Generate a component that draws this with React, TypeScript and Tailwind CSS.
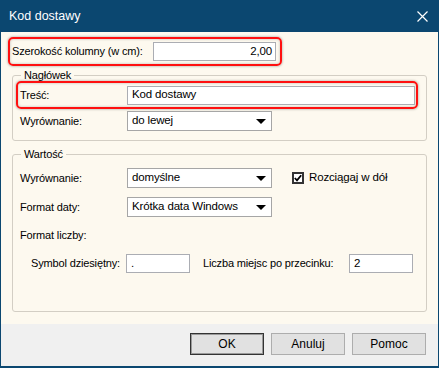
import React from "react";

const font = { fontFamily: '"Liberation Sans", Arial, sans-serif' };

function Arrow() {
  return (
    <svg width="10" height="5" viewBox="0 0 10 5" className="shrink-0">
      <polygon points="0,0 10,0 5,5" fill="#000" />
    </svg>
  );
}

function Select({ value }: { value: string }) {
  return (
    <div className="flex h-[20px] w-[145px] shrink-0 items-center justify-between border border-[#a6a6a6] bg-white pl-[4px] pr-[5px]">
      <span className="whitespace-nowrap text-[11.5px] leading-none">{value}</span>
      <Arrow />
    </div>
  );
}

function TextBox({ value, w, right }: { value: string; w: string; right?: boolean }) {
  return (
    <div
      className={`flex h-[19px] shrink-0 items-center border border-[#abadb3] bg-white px-[4px] ${w} ${
        right ? "justify-end pr-[3px]" : ""
      }`}
    >
      <span className="whitespace-nowrap text-[11.5px] leading-none">{value}</span>
    </div>
  );
}

const red =
  "rounded-[5px] border-2 border-[#ff1010] shadow-[0_0_2px_1px_rgba(0,0,0,0.18),inset_0_0_2px_1px_rgba(0,0,0,0.12)]";

export default function App() {
  return (
    <div
      className="flex h-[368px] w-[439px] flex-col border-x border-b-2 border-[#0b4770] bg-[#0b4770] whitespace-nowrap text-[11px] tracking-[-0.15px] text-black"
      style={font}
    >
      {/* Title bar */}
      <div className="flex h-[32px] shrink-0 items-center justify-between pl-[8px] pr-[10px] tracking-normal text-white">
        <span className="text-[12.5px]">Kod dostawy</span>
        <svg width="11" height="11" viewBox="0 0 11 11">
          <path d="M0.5 0.5 L10.5 10.5 M10.5 0.5 L0.5 10.5" stroke="#fff" strokeWidth="1.2" />
        </svg>
      </div>

      {/* Body */}
      <div className="flex h-[292px] shrink-0 flex-col bg-[#fdf9ef] pl-[7px]">
        <div className={`mt-[5px] flex h-[29px] w-[274px] items-center justify-between pl-[2px] pr-[4px] ${red}`}>
          <span>Szerokość kolumny (w cm):</span>
          <TextBox value="2,00" w="w-[123px]" right />
        </div>

        {/* Nagłówek */}
        <fieldset className="ml-[4px] mt-[3px] w-[415px] rounded-[3px] border border-[#d3cec4] pb-[9px]">
          <legend className="ml-[8px] px-[3px] leading-[12px]">Nagłówek</legend>
          <div className={`ml-[3px] flex h-[28px] w-[402px] items-center pr-[1px] ${red}`}>
            <span className="w-[109px] shrink-0 pl-[2px]">Treść:</span>
            <TextBox value="Kod dostawy" w="w-[288px]" />
          </div>
          <div className="mt-[2px] flex h-[20px] items-center">
            <span className="w-[114px] shrink-0 pl-[7px]">Wyrównanie:</span>
            <Select value="do lewej" />
          </div>
        </fieldset>

        {/* Wartość */}
        <fieldset className="ml-[4px] mt-[7px] h-[164px] w-[415px] rounded-[3px] border border-[#d3cec4]">
          <legend className="ml-[8px] px-[3px] leading-[12px]">Wartość</legend>
          <div className="mt-[8px] flex h-[20px] items-center">
            <span className="w-[114px] shrink-0 pl-[7px]">Wyrównanie:</span>
            <Select value="domyślne" />
            <div className="ml-[20px] flex items-center gap-[5px]">
              <div className="flex h-[12px] w-[12px] items-center justify-center border-2 border-[#333] bg-white">
                <svg width="8" height="8" viewBox="0 0 8 8">
                  <path d="M0.8 4 L3 6.3 L7.2 1.2" stroke="#000" strokeWidth="1.8" fill="none" />
                </svg>
              </div>
              <span className="text-[11.5px]">Rozciągaj w dół</span>
            </div>
          </div>
          <div className="mt-[9px] flex h-[20px] items-center">
            <span className="w-[114px] shrink-0 pl-[7px]">Format daty:</span>
            <Select value="Krótka data Windows" />
          </div>
          <div className="mt-[11px] flex h-[14px] items-center pl-[7px]">Format liczby:</div>
          <div className="mt-[12px] flex h-[19px] items-center">
            <span className="w-[113px] shrink-0 pl-[18px]">Symbol dziesiętny:</span>
            <TextBox value="." w="w-[64px]" />
            <span className="ml-[13px] w-[146px] shrink-0">Liczba miejsc po przecinku:</span>
            <TextBox value="2" w="w-[64px]" />
          </div>
        </fieldset>
      </div>

      {/* Footer */}
      <div className="flex h-[42px] shrink-0 justify-end gap-[7px] bg-[#f0f0f0] pr-[12px] pt-[9px] tracking-normal">
        <button className="h-[22px] w-[74px] border border-[#333] bg-[#e1e1e1] text-[12px] shadow-[inset_0_0_0_1px_#9a9a9a]">
          OK
        </button>
        <button className="h-[22px] w-[74px] border border-[#adadad] bg-[#e1e1e1] text-[12px]">Anuluj</button>
        <button className="h-[22px] w-[74px] border border-[#adadad] bg-[#e1e1e1] text-[12px]">Pomoc</button>
      </div>
    </div>
  );
}
